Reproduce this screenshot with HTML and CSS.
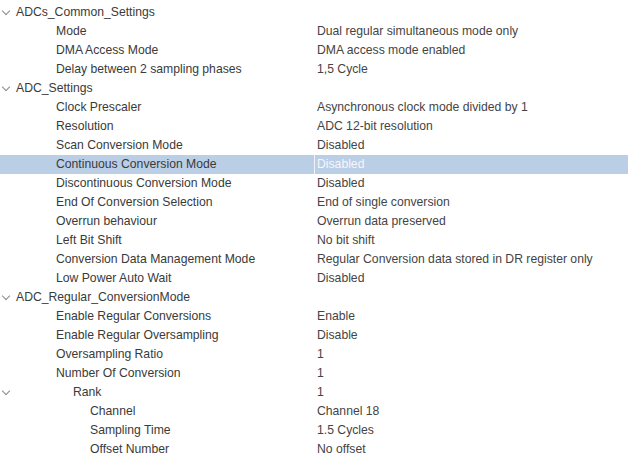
FILE: index.html
```html
<!DOCTYPE html>
<html>
<head>
	<meta charset="utf-8"/>
	<title>ADC Parameter Settings</title>
	<link rel="stylesheet" href="styles.css">
</head>
<body>
	<ul class="tree">
		<li class="row group"><span class="name"><i class="arrow"></i>ADCs_Common_Settings</span><span class="val"></span></li>
		<li class="row lv1"><span class="name">Mode</span><span class="val">Dual regular simultaneous mode only</span></li>
		<li class="row lv1"><span class="name">DMA Access Mode</span><span class="val">DMA access mode enabled</span></li>
		<li class="row lv1"><span class="name">Delay between 2 sampling phases</span><span class="val">1,5 Cycle</span></li>
		<li class="row group"><span class="name"><i class="arrow"></i>ADC_Settings</span><span class="val"></span></li>
		<li class="row lv1"><span class="name">Clock Prescaler</span><span class="val">Asynchronous clock mode divided by 1</span></li>
		<li class="row lv1"><span class="name">Resolution</span><span class="val">ADC 12-bit resolution</span></li>
		<li class="row lv1"><span class="name">Scan Conversion Mode</span><span class="val">Disabled</span></li>
		<li class="row lv1 active"><span class="name">Continuous Conversion Mode</span><span class="val">Disabled</span></li>
		<li class="row lv1"><span class="name">Discontinuous Conversion Mode</span><span class="val">Disabled</span></li>
		<li class="row lv1"><span class="name">End Of Conversion Selection</span><span class="val">End of single conversion</span></li>
		<li class="row lv1"><span class="name">Overrun behaviour</span><span class="val">Overrun data preserved</span></li>
		<li class="row lv1"><span class="name">Left Bit Shift</span><span class="val">No bit shift</span></li>
		<li class="row lv1"><span class="name">Conversion Data Management Mode</span><span class="val">Regular Conversion data stored in DR register only</span></li>
		<li class="row lv1"><span class="name">Low Power Auto Wait</span><span class="val">Disabled</span></li>
		<li class="row group"><span class="name"><i class="arrow"></i>ADC_Regular_ConversionMode</span><span class="val"></span></li>
		<li class="row lv1"><span class="name">Enable Regular Conversions</span><span class="val">Enable</span></li>
		<li class="row lv1"><span class="name">Enable Regular Oversampling</span><span class="val">Disable</span></li>
		<li class="row lv1"><span class="name">Oversampling Ratio</span><span class="val">1</span></li>
		<li class="row lv1"><span class="name">Number Of Conversion</span><span class="val">1</span></li>
		<li class="row lv2"><span class="name"><i class="arrow"></i>Rank</span><span class="val">1</span></li>
		<li class="row lv3"><span class="name">Channel</span><span class="val">Channel 18</span></li>
		<li class="row lv3"><span class="name">Sampling Time</span><span class="val">1.5 Cycles</span></li>
		<li class="row lv3"><span class="name">Offset Number</span><span class="val">No offset</span></li>
	</ul>
</body>
</html>
```

FILE: styles.css
```css
*{margin: 0;padding: 0;}
ul{list-style-type: none;}
body{
	background: #fff;
	font-family: "Liberation Sans", Arial, sans-serif;
	font-size: 12.2px;
	color: #3a3a3a;
}
.tree{
	padding-top: 3px;
}
.row{
	display: flex;
	height: 19px;
	line-height: 19px;
	white-space: nowrap;
}
.name{
	position: relative;
	width: 315px;
	box-sizing: border-box;
	border-right: 1px solid transparent;
}
.val{
	padding-left: 2px;
	color: #444;
}
.group .name{padding-left: 16px;}
.lv1 .name{padding-left: 56px;}
.lv2 .name{padding-left: 73px;}
.lv3 .name{padding-left: 90px;}

.arrow{
	position: absolute;
	left: 3px;
	top: 5px;
	width: 5px;
	height: 5px;
	border-right: 1px solid #8a8a8a;
	border-bottom: 1px solid #8a8a8a;
	transform: rotate(45deg);
}

.row.active{
	background: #bacee6;
}
.row.active .name{
	border-right-color: #eef3f9;
}
.row.active .val{
	color: #f4f7fb;
}
```
